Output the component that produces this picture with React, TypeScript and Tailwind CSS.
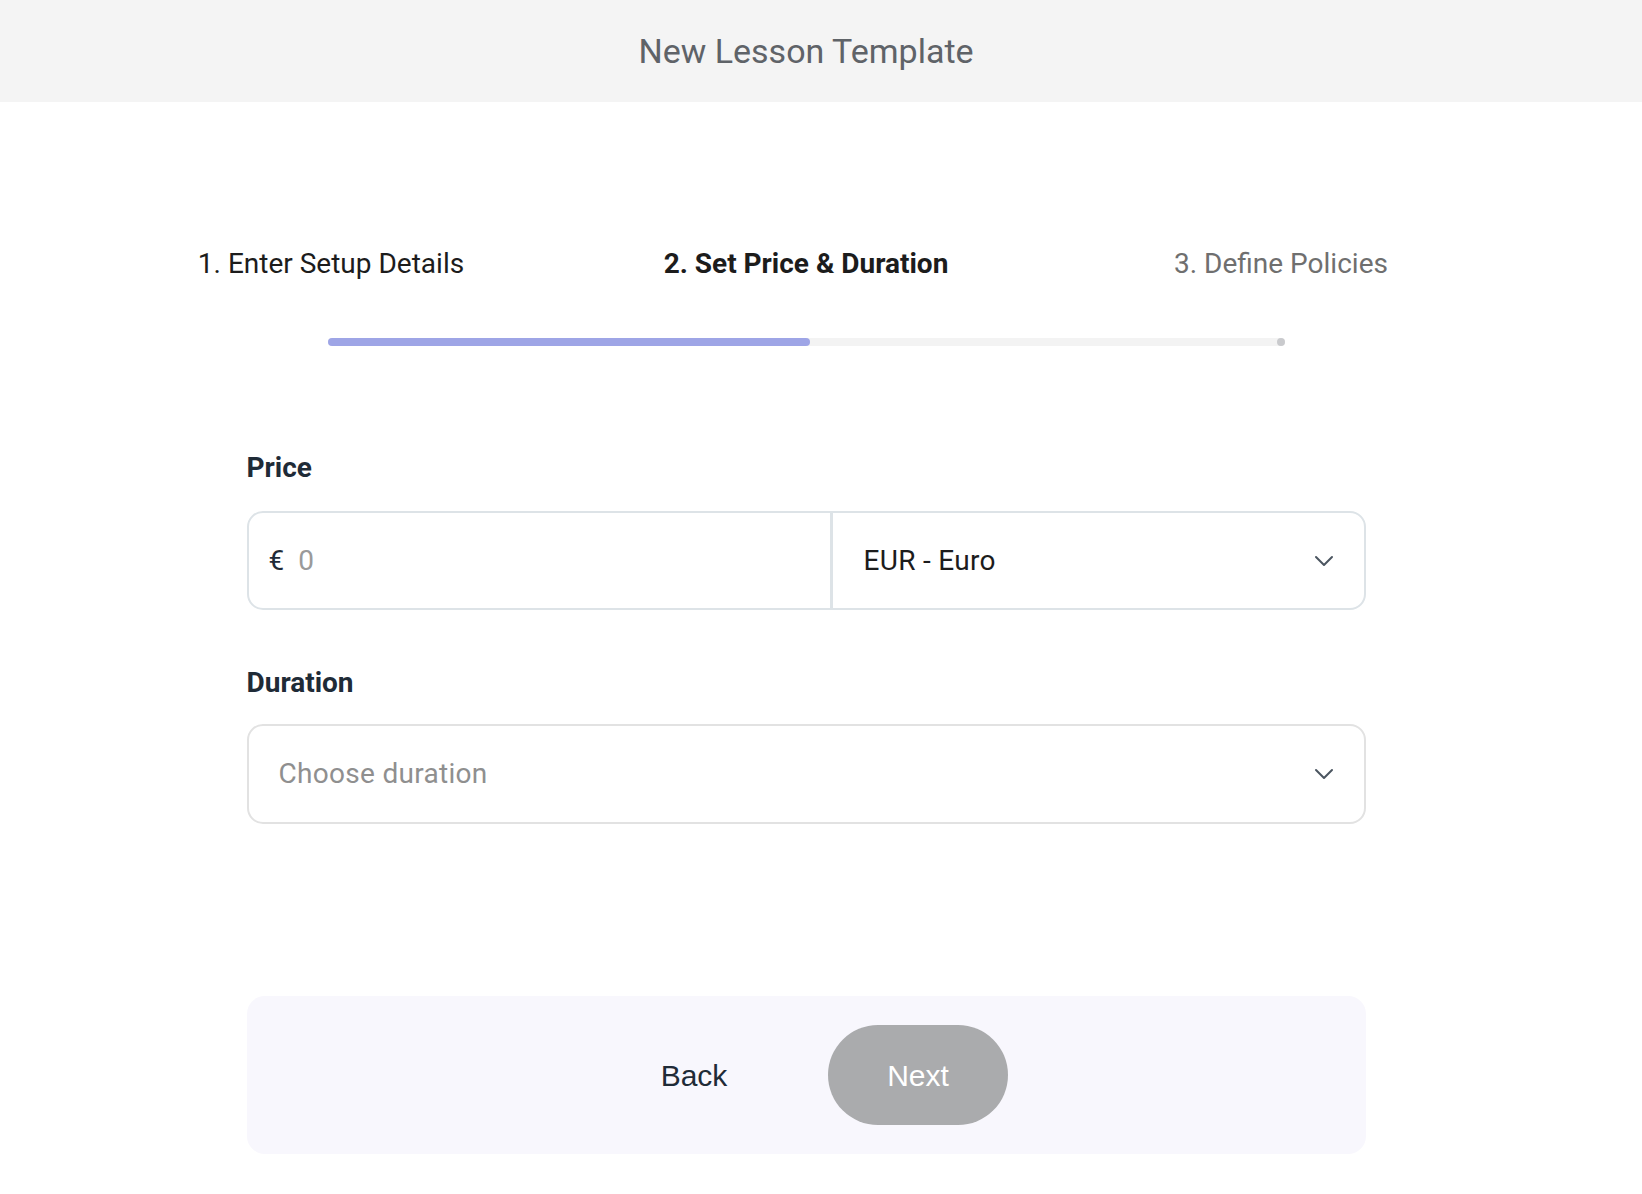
export default function App() {
  const steps = [
    { label: "1. Enter Setup Details", state: "done" },
    { label: "2. Set Price & Duration", state: "active" },
    { label: "3. Define Policies", state: "todo" },
  ];

  return (
    <main className="min-h-[1194px] w-full bg-white font-['Roboto',sans-serif]">
      <header className="h-[102px] w-full bg-[#f4f4f4]">
        <div className="flex h-full w-[1612px] items-center justify-center">
          <h1 className="text-[34px] text-[#5f6368]">New Lesson Template</h1>
        </div>
      </header>

      <div className="w-[1612px]">
        <div className="mx-auto mt-[143px] grid w-[1425px] grid-cols-3">
          {steps.map((s) => (
            <div
              key={s.label}
              className={
                "text-center text-[28px] leading-[38px] " +
                (s.state === "active"
                  ? "font-bold text-[#1c1c1c]"
                  : s.state === "done"
                  ? "text-[#1c1c1c]"
                  : "text-[#6f6f6f]")
              }
            >
              {s.label}
            </div>
          ))}
        </div>

        <div className="relative mx-auto mt-[55px] h-[8px] w-[957px] rounded-full bg-[#f3f3f3]">
          <div className="h-full w-[482px] rounded-full bg-[#9ea5e6]" />
          <span className="absolute right-0 top-0 h-[8px] w-[8px] rounded-full bg-[#c9cacd]" />
        </div>

        <section className="mx-auto mt-[103px] w-[1119px]">
          <Label text="Price" />
          <div className="mt-[24px] flex h-[99px] overflow-hidden rounded-[16px] border-2 border-[#dde3e7]">
            <div className="flex w-[581px] items-center pl-[20px] text-[28px]">
              <span className="text-[#1f2b37]">€</span>
              <span className="ml-[14px] text-[#9a9a9a]">0</span>
            </div>
            <div className="flex flex-1 items-center justify-between border-l-[3px] border-[#dde3e7] pl-[31px] pr-[30px]">
              <span className="text-[28px] tracking-[0.3px] text-[#1c1c1c]">EUR - Euro</span>
              <Chevron />
            </div>
          </div>

          <div className="mt-[54px]">
            <Label text="Duration" />
          </div>
          <div className="mt-[22px] flex h-[100px] items-center justify-between rounded-[16px] border-2 border-[#e2e2e2] pl-[30px] pr-[30px]">
            <span className="text-[28px] tracking-[0.3px] text-[#8f8f8f]">Choose duration</span>
            <Chevron />
          </div>

          <div className="mt-[172px] flex h-[158px] items-center justify-center gap-[44px] rounded-[18px] bg-[#f8f7fd]">
            <button className="h-[100px] w-[180px] font-['Liberation_Sans',sans-serif] text-[30px] text-[#1f2b37]">
              Back
            </button>
            <button className="h-[100px] w-[180px] rounded-full bg-[#aaabad] font-['Liberation_Sans',sans-serif] text-[30px] text-white">
              Next
            </button>
          </div>
        </section>
      </div>
    </main>
  );
}

function Label({ text }: { text: string }) {
  return <p className="text-[28px] font-bold leading-[38px] text-[#1f2b37]">{text}</p>;
}

function Chevron() {
  return (
    <svg width="20" height="12" viewBox="0 0 20 12" fill="none">
      <polyline
        points="2,2 10,10 18,2"
        stroke="#4b5560"
        strokeWidth="2"
        strokeLinecap="round"
        strokeLinejoin="round"
      />
    </svg>
  );
}
